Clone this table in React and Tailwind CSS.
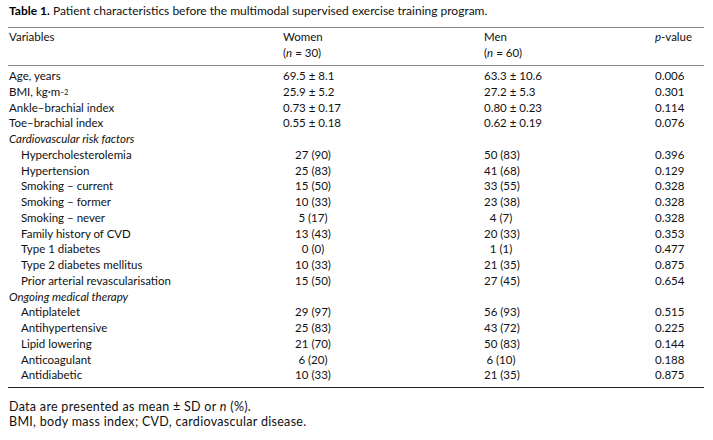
import React from "react";

// Table 1 — patient characteristics (journal-style table)
const rows = [
  { label: "Age, years", w: "69.5 ± 8.1", m: "63.3 ± 10.6", p: "0.006" },
  { label: "BMI", sup: true, w: "25.9 ± 5.2", m: "27.2 ± 5.3", p: "0.301" },
  { label: "Ankle–brachial index", w: "0.73 ± 0.17", m: "0.80 ± 0.23", p: "0.114" },
  { label: "Toe–brachial index", w: "0.55 ± 0.18", m: "0.62 ± 0.19", p: "0.076" },
  { section: "Cardiovascular risk factors" },
  { label: "Hypercholesterolemia", w: "27 (90)", m: "50 (83)", p: "0.396", n: true },
  { label: "Hypertension", w: "25 (83)", m: "41 (68)", p: "0.129", n: true },
  { label: "Smoking – current", w: "15 (50)", m: "33 (55)", p: "0.328", n: true },
  { label: "Smoking – former", w: "10 (33)", m: "23 (38)", p: "0.328", n: true },
  { label: "Smoking – never", w: "5 (17)", m: "4 (7)", p: "0.328", n: true },
  { label: "Family history of CVD", w: "13 (43)", m: "20 (33)", p: "0.353", n: true },
  { label: "Type 1 diabetes", w: "0 (0)", m: "1 (1)", p: "0.477", n: true },
  { label: "Type 2 diabetes mellitus", w: "10 (33)", m: "21 (35)", p: "0.875", n: true },
  { label: "Prior arterial revascularisation", w: "15 (50)", m: "27 (45)", p: "0.654", n: true },
  { section: "Ongoing medical therapy" },
  { label: "Antiplatelet", w: "29 (97)", m: "56 (93)", p: "0.515", n: true },
  { label: "Antihypertensive", w: "25 (83)", m: "43 (72)", p: "0.225", n: true },
  { label: "Lipid lowering", w: "21 (70)", m: "50 (83)", p: "0.144", n: true },
  { label: "Anticoagulant", w: "6 (20)", m: "6 (10)", p: "0.188", n: true },
  { label: "Antidiabetic", w: "10 (33)", m: "21 (35)", p: "0.875", n: true },
];

const grid = "grid grid-cols-[274px_201px_171px_1fr]";

export default function App() {
  return (
    <div className="w-[713px] h-[440px] bg-white text-[#111] text-[11.5px] font-['Lato',sans-serif] px-[8px] pt-[4px]">
      <div className="leading-[14px] pl-[1px] text-[12px]">
        <span className="font-bold text-black">Table 1.</span>{" "}
        <span>Patient characteristics before the multimodal supervised exercise training program.</span>
      </div>

      <div className="w-[696px] mt-[9px] border-t border-[#8a8a8a]">
        {/* header */}
        <div className={grid + " leading-[16px] pt-[1px] pb-[4px] pl-[1px]"}>
          <div>Variables</div>
          <div>
            <div>Women</div>
            <div>
              (<span className="italic">n</span> = 30)
            </div>
          </div>
          <div>
            <div>Men</div>
            <div>
              (<span className="italic">n</span> = 60)
            </div>
          </div>
          <div>
            <span className="italic">p</span>-value
          </div>
        </div>

        <div className="border-t border-[#8a8a8a] pt-[2px] pb-[4px] pl-[1px]">
          {rows.map((r, i) =>
            r.section ? (
              <div key={i} className="h-[15.75px] leading-[15.75px] italic">
                {r.section}
              </div>
            ) : (
              <div key={i} className={grid + " h-[15.75px] leading-[15.75px] whitespace-nowrap"}>
                <div className={r.n ? "pl-[12px]" : ""}>
                  {r.label}
                  {r.sup && (
                    <>
                      , kg·m<sup className="text-[7px] relative -top-[1px]">−2</sup>
                    </>
                  )}
                </div>
                <div>
                  {r.n ? <span className="inline-block w-[60px] text-center">{r.w}</span> : r.w}
                </div>
                <div>
                  {r.n ? <span className="inline-block w-[34px] text-center">{r.m}</span> : r.m}
                </div>
                <div>{r.p}</div>
              </div>
            )
          )}
        </div>

        <div className="border-t border-[#222]" />
      </div>

      <div className="mt-[11px] leading-[15px] text-[12.5px] tracking-[0.3px] pl-[1px]">
        <div>
          Data are presented as mean ± SD or <span className="italic">n</span> (%).
        </div>
        <div>BMI, body mass index; CVD, cardiovascular disease.</div>
      </div>
    </div>
  );
}
